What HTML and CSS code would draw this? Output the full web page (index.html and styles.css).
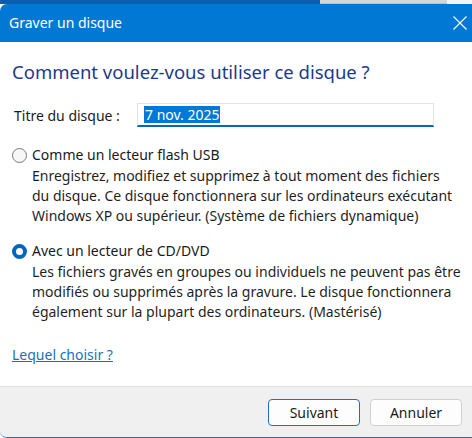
FILE: index.html
```html
<!DOCTYPE html>
<html lang="fr">
<head>
<meta charset="utf-8">
<title>Graver un disque</title>
<link rel="stylesheet" href="styles.css">
</head>
<body>
<div class="screen">
  <div class="backdrop">
    <div class="bd-blue"></div>
    <div class="bd-grey"></div>
    <div class="bd-white"></div>
  </div>
  <div class="dialog">
    <div class="titlebar">
      <span class="title">Graver un disque</span>
      <svg class="close" width="14" height="14" viewBox="0 0 14 14" aria-hidden="true">
        <path d="M0.5 0.5 L13.5 13.5 M13.5 0.5 L0.5 13.5" stroke="#ffffff" stroke-width="1.1" fill="none"/>
      </svg>
    </div>
    <div class="content">
      <h1 class="heading">Comment voulez-vous utiliser ce disque ?</h1>
      <div class="name-row">
        <span class="name-label">Titre du disque :</span>
        <div class="name-input"><span class="selected">7 nov. 2025</span></div>
      </div>
      <div class="option">
        <div class="option-head">
          <span class="radio"></span>
          <span class="option-label">Comme un lecteur flash USB</span>
        </div>
        <p class="option-desc">Enregistrez, modifiez et supprimez à tout moment des fichiers<br>du disque. Ce disque fonctionnera sur les ordinateurs exécutant<br>Windows XP ou supérieur. (Système de fichiers dynamique)</p>
      </div>
      <div class="option option-second">
        <div class="option-head">
          <span class="radio radio-checked"></span>
          <span class="option-label">Avec un lecteur de CD/DVD</span>
        </div>
        <p class="option-desc">Les fichiers gravés en groupes ou individuels ne peuvent pas être<br>modifiés ou supprimés après la gravure. Le disque fonctionnera<br>également sur la plupart des ordinateurs. (Mastérisé)</p>
      </div>
      <a class="help-link" href="#">Lequel choisir ?</a>
    </div>
    <div class="footer">
      <button class="btn btn-default">Suivant</button>
      <button class="btn">Annuler</button>
    </div>
  </div>
</div>
</body>
</html>
```

FILE: styles.css
```css
html, body {
  margin: 0;
  padding: 0;
  background: #ffffff;
}

body {
  font-family: "Noto Sans", "Open Sans", "Liberation Sans", sans-serif;
  font-size: 14px;
  color: #1a1a1a;
}

.screen {
  width: 472px;
  height: 438px;
  overflow: hidden;
  background: #ffffff;
}

.backdrop {
  display: flex;
  height: 4px;
}

.bd-blue {
  width: 320px;
  background: #0b5dae;
}

.bd-grey {
  width: 127px;
  background: #d6d6d6;
  border-bottom: 1px solid #bdbdbd;
  box-sizing: border-box;
}

.bd-white {
  flex: 1;
  background: #f4f4f4;
}

.dialog {
  height: 433px;
  display: flex;
  flex-direction: column;
  border-radius: 7px 0 0 7px;
  overflow: hidden;
  border-bottom: 1px solid #1f6fc0;
  background: #ffffff;
}

.titlebar {
  height: 38px;
  flex: none;
  background: #0078d4;
  display: flex;
  align-items: center;
  justify-content: space-between;
  padding: 0 4px 0 9px;
  color: #ffffff;
}

.title {
  font-size: 14px;
  line-height: 20px;
}

.close {
  display: block;
  margin-right: 1px;
}

.content {
  flex: 1;
  min-height: 0;
  overflow: hidden;
  padding: 16px 12px 0 12px;
}

.heading {
  margin: 0;
  font-size: 18.5px;
  line-height: 28px;
  font-weight: normal;
  color: #1c3a8e;
}

.name-row {
  display: flex;
  align-items: center;
  margin-top: 17px;
  padding-left: 2px;
}

.name-label {
  width: 123px;
}

.name-input {
  width: 297px;
  height: 24px;
  box-sizing: border-box;
  border: 1px solid #e3e3e3;
  border-bottom: 2px solid #0067c0;
  padding: 2px 0 0 6px;
  display: flex;
  align-items: flex-start;
}

.selected {
  background: #0078d7;
  color: #ffffff;
  line-height: 17px;
  padding: 0 1px;
}

.option {
  margin-top: 18px;
}

.option-second {
  margin-top: 15px;
}

.option-head {
  display: flex;
  align-items: center;
  gap: 5px;
}

.radio {
  width: 15px;
  height: 15px;
  box-sizing: border-box;
  border-radius: 50%;
  border: 1px solid #7a7a7a;
  background: #f7f7f7;
  flex: none;
}

.radio-checked {
  border: 4.5px solid #0067c0;
  background: #ffffff;
}

.option-label {
  line-height: 20px;
}

.option-desc {
  margin: 1px 0 0 20px;
  line-height: 20px;
  color: #1f1f1f;
  white-space: nowrap;
}

.help-link {
  display: inline-block;
  margin-top: 23px;
  line-height: 20px;
  color: #1a6fbd;
  text-decoration: underline;
}

.footer {
  flex: none;
  height: 51px;
  box-sizing: border-box;
  background: #f0f0f0;
  border-top: 1px solid #e0e0e0;
  display: flex;
  justify-content: flex-end;
  align-items: flex-start;
  gap: 10px;
  padding: 12px 10px 0 0;
}

.btn {
  width: 92px;
  height: 27px;
  box-sizing: border-box;
  border: 1px solid #d0d0d0;
  border-radius: 4px;
  background: #fdfdfd;
  font-family: "Noto Sans", "Open Sans", "Liberation Sans", sans-serif;
  font-size: 14px;
  color: #1a1a1a;
  padding: 0;
}

.btn-default {
  border-color: #1f6fc0;
}
```
